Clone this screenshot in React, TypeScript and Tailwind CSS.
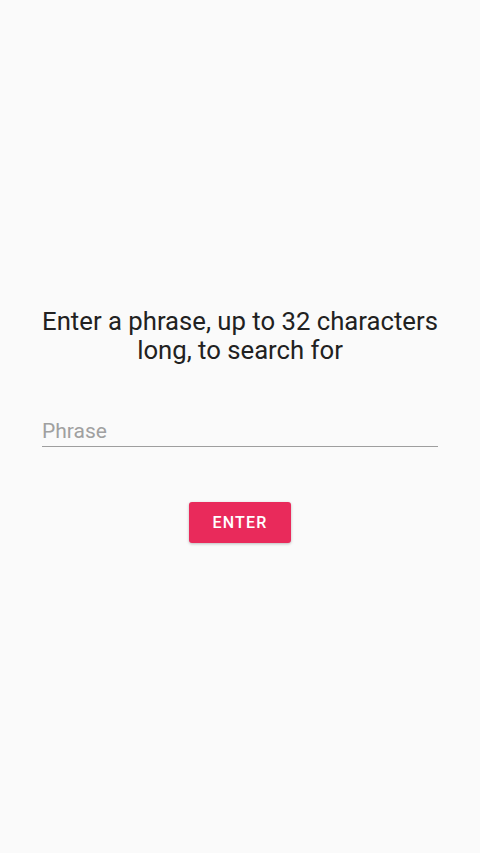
import React, { useState } from 'react';

export default function App() {
  const [phrase, setPhrase] = useState('');

  return (
    <div className="min-h-[853px] w-full bg-[#fafafa] flex flex-col items-center justify-center px-[40px] pb-[3px]" style={{ fontFamily: 'Roboto, "Noto Sans", sans-serif' }}>
      <h1 className="text-[25.7px] leading-[29px] text-[#212121] text-center font-normal">
        Enter a phrase, up to 32 characters long, to search for
      </h1>

      <input
        value={phrase}
        maxLength={32}
        onChange={e => setPhrase(e.target.value)}
        placeholder="Phrase"
        className="mt-[53px] w-[396px] bg-transparent border-b border-[#9e9e9e] text-[21px] leading-[26px] pb-[2px] text-[#212121] placeholder:text-[#a0a0a0] outline-none"
      />

      <button className="mt-[55px] w-[102px] h-[41px] rounded-[3px] bg-[#e92a5b] text-white text-[16px] font-medium tracking-[1.2px] shadow-[0_1px_3px_rgba(0,0,0,0.25)]">
        ENTER
      </button>
    </div>
  );
}
